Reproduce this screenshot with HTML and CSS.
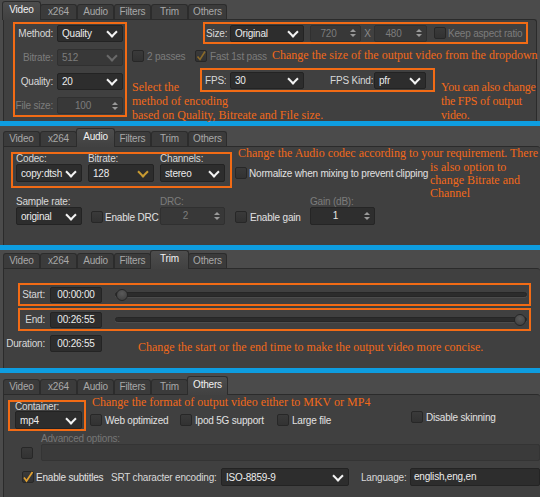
FILE: index.html
```html
<!DOCTYPE html>
<html lang="en">
<head>
	<meta charset="UTF-8">
	<title>Output settings</title>
	<link rel="stylesheet" href="styles.css">
</head>
<body>

	<!-- video tab -->
	<section class="shot s1">
		<nav class="tabs">
			<span class="tab on">Video</span><span class="tab">x264</span><span class="tab">Audio</span><span class="tab">Filters</span><span class="tab">Trim</span><span class="tab">Others</span>
		</nav>
		<div class="panel p-video">
			<div class="mark method">
				<div class="frow"><label>Method:</label><div class="combo w66"><span>Quality</span></div></div>
				<div class="frow off"><label>Bitrate:</label><div class="combo w66"><span>512</span></div></div>
				<div class="frow"><label>Quality:</label><div class="combo w66"><span>20</span></div></div>
				<div class="frow off"><label>File size:</label><div class="spin w66"><span class="val">100</span><span class="arr"></span></div></div>
			</div>
			<div class="vright">
				<div class="mark size">
					<label class="l-size">Size:</label>
					<div class="combo w74"><span>Original</span></div>
					<div class="spin off s720"><span class="val">720</span><span class="arr"></span></div>
					<span class="times">X</span>
					<div class="spin off s480"><span class="val">480</span><span class="arr"></span></div>
					<div class="cb off keep"><i></i>Keep aspect ratio</div>
				</div>
				<div class="passes">
					<div class="cb off two"><i></i>2 passes</div>
					<div class="cb off"><i class="on"><svg viewBox="0 0 12 12" width="12" height="12"><path d="M2.5 6.5l2.5 3 5-8" fill="none" stroke="#8a6a2a" stroke-width="1.6"/></svg></i>Fast 1st pass</div>
				</div>
				<div class="mark fps">
					<label class="l-fps">FPS:</label>
					<div class="combo w74"><span>30</span></div>
					<label class="l-kind">FPS Kind:</label>
					<div class="combo w52"><span>pfr</span></div>
				</div>
			</div>
		</div>
		<p class="note" style="left:272px;top:48px">Change the size of the output video from the dropdown</p>
		<p class="note" style="left:132px;top:80px">Select the<br>method of encoding<br>based on Quality, Bitreate and File size.</p>
		<p class="note narrow" style="left:441px;top:80px">You can also change<br>the FPS of output<br>video.</p>
	</section>

	<div class="sep"></div>

	<!-- audio tab -->
	<section class="shot s2">
		<nav class="tabs">
			<span class="tab">Video</span><span class="tab">x264</span><span class="tab on">Audio</span><span class="tab">Filters</span><span class="tab">Trim</span><span class="tab">Others</span>
		</nav>
		<div class="panel p-audio">
			<div class="arow">
				<div class="mark codec">
					<div class="fcol w66"><label>Codec:</label><div class="combo"><span>copy:dtsh</span></div></div>
					<div class="fcol w66"><label>Bitrate:</label><div class="combo gold"><span>128</span></div></div>
					<div class="fcol w65"><label>Channels:</label><div class="combo"><span>stereo</span></div></div>
				</div>
				<div class="cb norm"><i></i>Normalize when mixing to prevent clipping</div>
			</div>
			<div class="arow row2">
				<div class="fcol w66 rate"><label>Sample rate:</label><div class="combo"><span>original</span></div></div>
				<div class="cb drc"><i></i>Enable DRC</div>
				<div class="fcol w65 off"><label>DRC:</label><div class="spin"><span class="val">2</span><span class="arr"></span></div></div>
				<div class="cb gain"><i></i>Enable gain</div>
				<div class="fcol w65"><label class="dim">Gain (dB):</label><div class="spin"><span class="val">1</span><span class="arr"></span></div></div>
			</div>
		</div>
		<p class="note" style="left:238px;top:20px">Change the Audio codec according to your requirement. There</p>
		<p class="note tight" style="left:430px;top:35px">is also option to<br>change Bitrate and<br>Channel</p>
	</section>

	<div class="sep"></div>

	<!-- trim tab -->
	<section class="shot s3">
		<nav class="tabs">
			<span class="tab">Video</span><span class="tab">x264</span><span class="tab">Audio</span><span class="tab">Filters</span><span class="tab on">Trim</span><span class="tab">Others</span>
		</nav>
		<div class="panel p-trim">
			<div class="mark trow">
				<label>Start:</label><div class="field time">00:00:00</div>
				<div class="slider"><span class="knob"></span></div>
			</div>
			<div class="mark trow">
				<label>End:</label><div class="field time">00:26:55</div>
				<div class="slider end"><span class="knob"></span></div>
			</div>
			<div class="drow">
				<label>Duration:</label><div class="field time">00:26:55</div>
			</div>
		</div>
		<p class="note" style="left:138px;top:90px">Change the start or the end time to make the output video more concise.</p>
	</section>

	<div class="sep"></div>

	<!-- others tab -->
	<section class="shot s4">
		<nav class="tabs">
			<span class="tab">Video</span><span class="tab">x264</span><span class="tab">Audio</span><span class="tab">Filters</span><span class="tab">Trim</span><span class="tab on">Others</span>
		</nav>
		<div class="panel p-others">
			<div class="orow">
				<div class="mark container">
					<label>Container:</label>
					<div class="combo"><span>mp4</span></div>
				</div>
				<div class="cb web"><i></i>Web optimized</div>
				<div class="cb ipod"><i></i>Ipod 5G support</div>
				<div class="cb large"><i></i>Large file</div>
				<div class="cb skin"><i></i>Disable skinning</div>
			</div>
			<div class="adv-label">Advanced options:</div>
			<div class="adv">
				<div class="cb"><i></i></div>
				<div class="field wide"></div>
			</div>
			<div class="subs">
				<div class="cb en"><i><svg viewBox="0 0 12 12" width="12" height="12"><path d="M2 6.5l2.5 3.5 6-9" fill="none" stroke="#e0a030" stroke-width="1.7"/></svg></i>Enable subtitles</div>
				<label class="l-srt">SRT character encoding:</label>
				<div class="combo iso"><span>ISO-8859-9</span></div>
				<label class="l-lang">Language:</label>
				<div class="field lang">english,eng,en</div>
			</div>
		</div>
		<p class="note" style="left:92px;top:22px">Change the format of output video either to MKV or MP4</p>
	</section>

</body>
</html>
```

FILE: styles.css
```css
*{
	box-sizing: border-box;
	margin: 0;
	padding: 0;
}
body{
	width: 540px;
	height: 497px;
	overflow: hidden;
	background: #4b4b4b;
	font: 10px "Liberation Sans", Arial, sans-serif;
	letter-spacing: -0.2px;
	color: #d8d8d8;
}
label{
	white-space: nowrap;
}

/* frames */
.shot{
	position: relative;
	display: flex;
	flex-direction: column;
	background: #4b4b4b;
}
.s1{height: 121px;}
.s2{height: 119px;}
.s3{height: 118px;}
.s4{height: 124px;}
.sep{
	height: 5px;
	background: #0e9de0;
}

/* tabs */
.tabs{
	display: flex;
	align-items: flex-end;
	padding-left: 3px;
	flex: none;
}
.s1 .tabs{height: 19px;}
.s2 .tabs{height: 20px;}
.s3 .tabs{height: 18px;}
.s4 .tabs{height: 21px;}
.tab{
	width: 37px;
	height: 15px;
	line-height: 14px;
	text-align: center;
	background: #3b3b3b;
	border: 1px solid #2c2c2c;
	border-bottom: none;
	border-radius: 3px 3px 0 0;
	color: #a8a8a8;
}
.tab:last-child{
	width: 39px;
}
.tab.on{
	position: relative;
	top: 1px;
	z-index: 1;
	height: 19px;
	line-height: 16px;
	margin: 0 -1px;
	width: 39px;
	background: linear-gradient(#4d4d4d, #414141);
	color: #f2f2f2;
}
.tab.on:last-child{
	width: 41px;
}
.panel{
	flex: 1;
	margin-left: 3px;
	background: #404040;
	border: 1px solid #2b2b2b;
	border-right: none;
	border-bottom: none;
	border-radius: 0 3px 0 0;
}
.s1 .panel{
	margin-right: 3px;
	border-right: 1px solid #2b2b2b;
}

/* annotation */
.mark{
	border: 2px solid #f26b15;
}
.note{
	position: absolute;
	font: 12px/14px "Liberation Serif", "Times New Roman", serif;
	letter-spacing: 0;
	color: #f2691a;
	white-space: nowrap;
}
.note.tight{
	line-height: 13px;
}
.note.narrow{
	letter-spacing: -0.2px;
}

/* widgets */
.combo{
	display: flex;
	align-items: center;
	height: 17px;
	padding: 0 6px 0 4px;
	background: #2d2d2d;
	border: 1px solid #232323;
	border-radius: 2px;
	color: #ececec;
	flex: none;
}
.combo span{
	flex: 1;
	overflow: hidden;
	white-space: nowrap;
}
.combo::after{
	content: '';
	flex: none;
	width: 6px;
	height: 6px;
	margin: -3px 0 0 4px;
	border-right: 2px solid #f4f4f4;
	border-bottom: 2px solid #f4f4f4;
	transform: rotate(45deg);
}
.combo.gold::after{
	border-color: #c99b32;
}
.spin{
	display: flex;
	height: 17px;
	background: #2e2e2e;
	border: 1px solid #252525;
	border-radius: 2px;
	color: #e6e6e6;
	flex: none;
}
.spin .val{
	flex: 1;
	text-align: center;
	line-height: 15px;
}
.spin .arr{
	width: 14px;
	display: flex;
	flex-direction: column;
	align-items: center;
	justify-content: center;
	gap: 2px;
}
.spin .arr::before,
.spin .arr::after{
	content: '';
	border-left: 3.5px solid transparent;
	border-right: 3.5px solid transparent;
}
.spin .arr::before{
	border-bottom: 3px solid #9a9a9a;
}
.spin .arr::after{
	border-top: 3px solid #9a9a9a;
}
.cb{
	display: flex;
	align-items: center;
	gap: 3px;
	white-space: nowrap;
	color: #e2e2e2;
	flex: none;
}
.cb i{
	display: block;
	width: 12px;
	height: 12px;
	flex: none;
	background: linear-gradient(#3a3a3a, #323232);
	border: 1px solid #272727;
	border-radius: 2px;
	overflow: visible;
}
.cb i svg{
	display: block;
	margin: -1px 0 0 -1px;
}
.field{
	height: 17px;
	line-height: 15px;
	background: #2d2d2d;
	border: 1px solid #242424;
	border-radius: 2px;
	color: #ececec;
}
.off, .off label, .off .combo, .off .spin, .dim{
	color: #7c7c7c;
}
.off .combo, .off.spin, .off .spin{
	background: #383838;
	border-color: #303030;
}
.off .combo::after{
	border-color: #6a6a6a;
}
.w66{width: 66px;}
.w65{width: 65px;}
.w74{width: 74px;}
.w52{width: 52px;}

/* video */
.p-video{
	display: flex;
	align-items: flex-start;
	padding: 2px 0 0 9px;
}
.method{
	width: 114px;
	height: 95px;
	padding-top: 1px;
	display: flex;
	flex-direction: column;
	gap: 7px;
}
.frow{
	display: flex;
	align-items: center;
	height: 17px;
}
.frow label{
	width: 38px;
	margin-right: 4px;
	text-align: right;
}
.vright{
	display: flex;
	flex-direction: column;
}
.size{
	display: flex;
	align-items: center;
	width: 325px;
	height: 22px;
	margin-left: 76px;
	padding-left: 1px;
}
.l-size{width: 24px;}
.s720{width: 51px; margin-left: 6px;}
.s480{width: 53px;}
.times{
	width: 13px;
	text-align: center;
	color: #8a8a8a;
}
.keep{margin-left: 7px; gap: 2px;}
.passes{
	display: flex;
	align-items: center;
	height: 24px;
}
.two{
	width: 63px;
	margin-left: 5px;
}
.fps{
	display: flex;
	align-items: center;
	width: 235px;
	height: 24px;
	margin-left: 73px;
	padding-left: 3px;
}
.l-fps{width: 25px;}
.l-kind{width: 44px; margin-left: 26px;}

/* audio */
.p-audio{
	padding: 5px 0 0 7px;
}
.arow{
	display: flex;
	align-items: flex-end;
}
.codec{
	display: flex;
	gap: 6px;
	width: 221px;
	height: 36px;
	padding-left: 3px;
}
.fcol{
	display: flex;
	flex-direction: column;
	flex: none;
}
.fcol label{
	height: 9px;
	line-height: 9px;
	margin-bottom: 1px;
}
.fcol .combo, .fcol .spin{
	height: 18px;
	width: 100%;
}
.norm{
	margin: 0 0 9px 3px;
	gap: 2px;
}
.row2{
	margin-top: 9px;
}
.row2 .cb{
	margin-bottom: 2px;
}
.rate{margin-left: 5px;}
.drc{width: 69px; margin-left: 9px; gap: 2px;}
.gain{width: 75px; margin-left: 10px; gap: 3px;}
.row2 .fcol .spin{width: 65px;}

/* trim */
.p-trim{
	padding: 14px 0 0 0;
}
.trow{
	display: flex;
	align-items: center;
	width: 513px;
	height: 23px;
	margin-left: 14px;
	padding-right: 2px;
}
.trow + .trow{
	margin-top: 2px;
}
.trow label{
	width: 25px;
	text-align: right;
}
.time{
	width: 52px;
	margin-left: 5px;
	height: 16px;
	line-height: 14px;
	text-align: center;
}
.slider{
	flex: 1;
	display: flex;
	align-items: center;
	height: 5px;
	margin-left: 13px;
	background: #2c2c2c;
	border: 1px solid #262626;
	border-radius: 3px;
	box-shadow: 0 1px 0 #4c4c4c;
}
.slider.end{
	justify-content: flex-end;
}
.knob{
	width: 12px;
	height: 12px;
	flex: none;
	border-radius: 50%;
	background: radial-gradient(circle at 50% 35%, #5a5a5a, #3c3c3c);
	border: 1px solid #262626;
}
.drow{
	display: flex;
	align-items: center;
	margin-top: 4px;
}
.drow label{
	width: 41px;
	text-align: right;
}
.drow .time{
	height: 17px;
	line-height: 15px;
}

/* others */
.p-others{
	padding: 5px 0 0 4px;
}
.orow{
	display: flex;
	align-items: flex-start;
}
.container{
	width: 78px;
	height: 31px;
	padding-left: 3px;
	flex: none;
}
.container label{
	display: block;
	height: 9px;
	line-height: 9px;
	padding-left: 2px;
}
.container .combo{
	width: 67px;
	height: 18px;
	margin-left: 2px;
}
.orow .cb{
	margin-top: 14px;
}
.web{width: 90px; margin-left: 4px;}
.ipod{width: 97px;}
.large{width: 134px;}
.orow .skin{margin-top: 11px;}
.adv-label{
	margin: 3px 0 0 33px;
	color: #767676;
	line-height: 9px;
}
.adv{
	display: flex;
	align-items: center;
	margin-top: 1px;
}
.adv .cb{
	margin-left: 13px;
}
.wide{
	flex: 1;
	margin-left: 8px;
	background: #3a3a3a;
	border-color: #343434;
}
.subs{
	display: flex;
	align-items: center;
	margin-top: 7px;
}
.en{
	width: 89px;
	margin-left: 14px;
	gap: 2px;
}
.l-srt{width: 110px;}
.iso{
	width: 128px;
	height: 18px;
}
.l-lang{
	width: 49px;
	margin-left: 12px;
}
.lang{
	flex: 1;
	height: 18px;
	line-height: 16px;
	padding-left: 3px;
}
```
